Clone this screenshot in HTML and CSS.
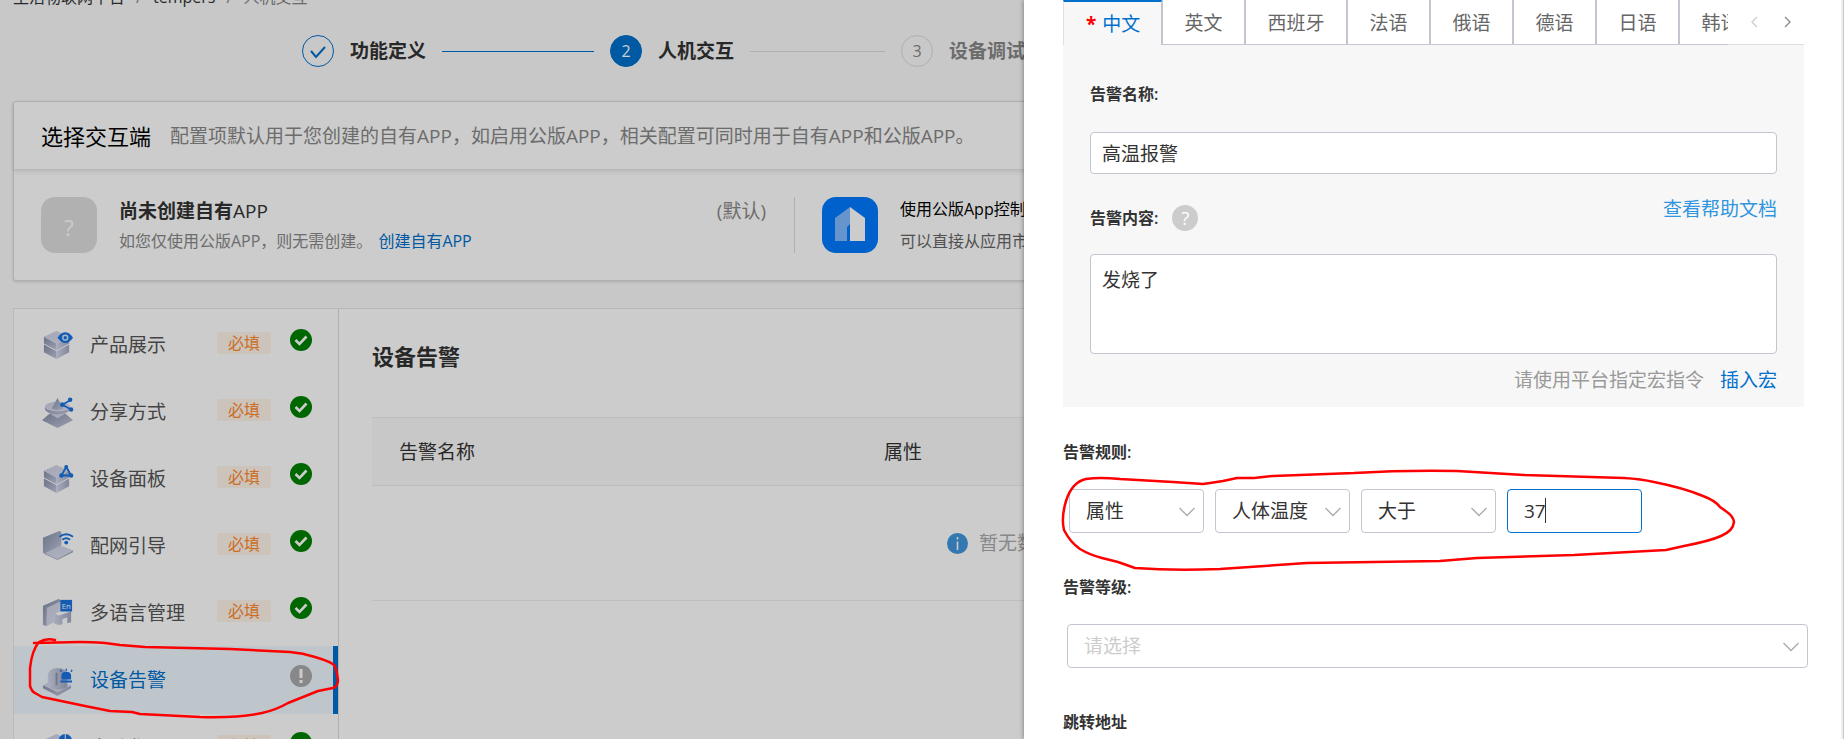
FILE: index.html
```html
<!DOCTYPE html>
<html lang="zh-CN">
<head>
  <meta charset="UTF-8">
  <title>人机交互 - 设备告警</title>
  <meta name="viewport" content="width=device-width, initial-scale=1.0">
  <link rel="stylesheet" href="styles.css">
</head>
<body>
  <!-- shared icon shapes -->
  <svg class="defs" width="0" height="0" aria-hidden="true">
    <defs>
      <linearGradient id="gTop" x1="0" y1="0" x2="1" y2="1">
        <stop offset="0" stop-color="#cbcfe2"/><stop offset="1" stop-color="#dcdff0"/>
      </linearGradient>
      <linearGradient id="gLeft" x1="0" y1="0" x2="1" y2="1">
        <stop offset="0" stop-color="#8790aa"/><stop offset="1" stop-color="#c4c9df"/>
      </linearGradient>
      <linearGradient id="gRight" x1="0" y1="0" x2="1" y2="0">
        <stop offset="0" stop-color="#d3d8ec"/><stop offset="1" stop-color="#a2aac2"/>
      </linearGradient>
    </defs>
    <symbol id="box" viewBox="0 0 34 34">
      <path d="M3 17l13 7v8L3 25z" fill="url(#gLeft)"/>
      <path d="M29 17l-13 7v8l13-7z" fill="url(#gRight)"/>
      <path d="M3 9l13 7v7L3 16z" fill="url(#gLeft)"/>
      <path d="M29 9l-13 7v7l13-7z" fill="url(#gRight)"/>
      <path d="M16 3l13 6-13 7L3 9z" fill="url(#gTop)"/>
    </symbol>
    <symbol id="ok" viewBox="0 0 22 22">
      <circle cx="11" cy="11" r="11" fill="#008000"/>
      <path d="M5.500 11l4 4 7-7.500" fill="none" stroke="#fff" stroke-width="2.600"/>
    </symbol>
    <symbol id="arrow" viewBox="0 0 16 10">
      <path d="M.5 1L8 8.500 15.500 1" fill="none" stroke="#aaa" stroke-width="1.300"/>
    </symbol>
  </svg>

  <div class="page">
    <nav class="breadcrumb">
      <a href="#">生活物联网平台</a><span>/</span><a href="#">tempers</a><span>/</span><em>人机交互</em>
    </nav>

    <ol class="steps">
      <li class="step">
        <span class="step-num done"><svg width="18" height="18" viewBox="0 0 18 18"><path d="M2 9l5 6 9-10" fill="none" stroke="#0070cc" stroke-width="2"/></svg></span>
        <b>功能定义</b>
      </li>
      <li class="step-line active"></li>
      <li class="step"><span class="step-num current">2</span><b>人机交互</b></li>
      <li class="step-line"></li>
      <li class="step wait"><span class="step-num">3</span><b>设备调试</b></li>
    </ol>

    <section class="card">
      <header class="card-head">
        <h2>选择交互端</h2>
        <p>配置项默认用于您创建的自有APP，如启用公版APP，相关配置可同时用于自有APP和公版APP。</p>
      </header>
      <div class="card-body">
        <div class="app own">
          <div class="app-icon">?</div>
          <div class="app-text">
            <h3>尚未创建自有<span>APP</span></h3>
            <p>如您仅使用公版APP，则无需创建。<a href="#">创建自有APP</a></p>
          </div>
          <span class="default">(默认)</span>
        </div>
        <div class="app public">
          <svg class="app-icon blue" viewBox="0 0 56 56">
            <path d="M28 10v17l-3 3v14H13V21z" fill="#80b9ff"/>
            <path d="M28 10l15 11v23H28z" fill="#fff"/>
          </svg>
          <div class="app-text">
            <h4>使用公版App控制设备</h4>
            <p>可以直接从应用市场下载</p>
          </div>
        </div>
      </div>
    </section>

    <section class="workspace">
      <ul class="menu">
        <li>
          <a href="#">
            <svg class="menu-icon" viewBox="0 0 34 34"><use href="#box"/><path d="M17 10q8-11 16 0-8 11-16 0z" fill="#1a73e0"/><circle cx="25" cy="10" r="2.500" fill="#1a73e0" stroke="#d5e4fa" stroke-width="1.500"/></svg>
            <span class="name">产品展示</span><span class="tag">必填</span>
            <svg class="state"><use href="#ok"/></svg>
          </a>
        </li>
        <li>
          <a href="#">
            <svg class="menu-icon" viewBox="0 0 34 34">
              <path d="M9 19h16l8 7-16 8L1 26z" fill="url(#gLeft)"/>
              <path d="M9 19h16l-8 5z" fill="url(#gTop)"/>
              <ellipse cx="17" cy="14" rx="13" ry="6" fill="url(#gLeft)"/>
              <ellipse cx="17" cy="12" rx="13" ry="5" fill="url(#gTop)"/>
              <path d="M17 3l6 11q-6 3-12 0z" fill="url(#gLeft)"/>
              <path d="M31 5l-9 5 9 5" fill="none" stroke="#1a73e0" stroke-width="1.800"/>
              <circle cx="30" cy="5" r="2.300" fill="#1a73e0"/><circle cx="22" cy="10" r="2.300" fill="#1a73e0"/><circle cx="31" cy="15" r="2.300" fill="#1a73e0"/>
            </svg>
            <span class="name">分享方式</span><span class="tag">必填</span>
            <svg class="state"><use href="#ok"/></svg>
          </a>
        </li>
        <li>
          <a href="#">
            <svg class="menu-icon" viewBox="0 0 34 34"><use href="#box"/><path d="M26 5l-5 9h10z" fill="none" stroke="#1a73e0" stroke-width="2"/><circle cx="26" cy="5" r="2" fill="#1a73e0"/><circle cx="21" cy="14" r="2.300" fill="#1a73e0"/><circle cx="31" cy="14" r="2.300" fill="#1a73e0"/></svg>
            <span class="name">设备面板</span><span class="tag">必填</span>
            <svg class="state"><use href="#ok"/></svg>
          </a>
        </li>
        <li>
          <a href="#">
            <svg class="menu-icon" viewBox="0 0 34 34">
              <path d="M2 9l17-7 2 1v14L4 26l-2-2z" fill="url(#gLeft)"/>
              <path d="M4 25l16-8 13 5-16 9z" fill="url(#gTop)"/>
              <path d="M4 25l13 6 16-9v2l-16 8-13-6z" fill="#a9b0c6"/>
              <path d="M19 8q7-5 14 0M22 11q4-3 8 0" fill="none" stroke="#1a73e0" stroke-width="2"/><circle cx="26" cy="14" r="2" fill="#1a73e0"/>
            </svg>
            <span class="name">配网引导</span><span class="tag">必填</span>
            <svg class="state"><use href="#ok"/></svg>
          </a>
        </li>
        <li>
          <a href="#">
            <svg class="menu-icon" viewBox="0 0 34 34">
              <path d="M2 10l16-7 4 2v7L6 19v12l-4-1z" fill="url(#gLeft)"/>
              <path d="M6 12l16-7v10l-9 4v8l-7 4z" fill="url(#gTop)"/>
              <path d="M13 17l5 3v10l-5-2zM18 20l13-4v11l-4 1v-6l-5 2v5l-4 1z" fill="url(#gRight)"/>
              <rect x="20" y="4" width="12" height="12" fill="#1a73e0"/>
              <text x="26" y="13" class="en">En</text>
            </svg>
            <span class="name">多语言管理</span><span class="tag">必填</span>
            <svg class="state"><use href="#ok"/></svg>
          </a>
        </li>
        <li class="selected">
          <a href="#">
            <svg class="menu-icon" viewBox="0 0 34 34">
              <path d="M2 22l15 6 14-6v3l-14 8-15-8z" fill="url(#gLeft)"/>
              <path d="M2 22l13-6 16 6-14 7z" fill="url(#gTop)"/>
              <path d="M7 24V13q0-9 10-9t10 9v11q-10 5-20 0z" fill="url(#gRight)"/>
              <path d="M16 9v13" stroke="#8e97b0" stroke-width="2"/>
              <path d="M20 17h12v2H20zM21 16v-4q0-4 5-4t5 4v4z" fill="#1a73e0"/>
              <path d="M26 5v2M20 6l1 2M32 6l-1 2" stroke="#1a73e0" stroke-width="1.500"/>
            </svg>
            <span class="name">设备告警</span>
            <svg class="state" viewBox="0 0 22 22"><circle cx="11" cy="11" r="11" fill="#aaa"/><path d="M11 4v9M11 15v3" stroke="#fff" stroke-width="3"/></svg>
          </a>
        </li>
        <li>
          <a href="#">
            <svg class="menu-icon" viewBox="0 0 34 34"><use href="#box"/><circle cx="25" cy="10" r="7" fill="#1a73e0"/><path d="M25 3v7l5 4" fill="none" stroke="#fff"/></svg>
            <span class="name">自动化</span><span class="tag">必填</span>
            <svg class="state"><use href="#ok"/></svg>
          </a>
        </li>
      </ul>

      <div class="content">
        <h2>设备告警</h2>
        <table>
          <thead>
            <tr><th class="col-name">告警名称</th><th>属性</th></tr>
          </thead>
          <tbody>
            <tr>
              <td colspan="2">
                <div class="empty">
                  <svg width="21" height="21" viewBox="0 0 21 21"><circle cx="10.500" cy="10.500" r="10.500" fill="#4096dc"/><path d="M10.500 4v2.500M10.500 8.500V17" stroke="#fff" stroke-width="1.600"/></svg>
                  暂无数据
                </div>
              </td>
            </tr>
          </tbody>
        </table>
      </div>
    </section>
  </div>

  <div class="mask"></div>

  <svg class="mark mark-menu" width="360" height="739" viewBox="0 0 360 739" aria-hidden="true">
    <path d="M55 640Q46 638 39 642 32 650 30 668V686Q32 692 35 693L42 697 85 706 110 711 132 712 140 714 200 717Q240 718 262 713 276 710 288 703L318 691 333 688Q338 686 338 680 337 672 335 666 332 662 315 657 303 653 290 652L230 649 145 647 120 645 105 643Q90 642 80 642L34 643"/>
  </svg>

  <aside class="drawer">
    <div class="tabs">
      <div class="tab-list" role="tablist">
        <button class="tab on" role="tab"><i>*</i>中文</button>
        <button class="tab" role="tab">英文</button>
        <button class="tab" role="tab">西班牙</button>
        <button class="tab" role="tab">法语</button>
        <button class="tab" role="tab">俄语</button>
        <button class="tab" role="tab">德语</button>
        <button class="tab" role="tab">日语</button>
        <button class="tab" role="tab">韩语</button>
      </div>
      <div class="tab-nav">
        <button aria-label="上一页" disabled><svg width="7" height="12" viewBox="0 0 7 12"><path d="M6 1L1 6l5 5" fill="none" stroke="#ccc" stroke-width="1.300"/></svg></button>
        <button aria-label="下一页"><svg width="7" height="12" viewBox="0 0 7 12"><path d="M1 1l5 5-5 5" fill="none" stroke="#888" stroke-width="1.300"/></svg></button>
      </div>
    </div>

    <form>
      <div class="panel">
        <label for="alarmName">告警名称:</label>
        <input type="text" id="alarmName" class="text" value="高温报警">
        <div class="label-row">
          <label for="alarmText">告警内容:</label>
          <span class="help">?</span>
          <a href="#">查看帮助文档</a>
        </div>
        <textarea id="alarmText">发烧了</textarea>
        <p class="macro">请使用平台指定宏指令<a href="#">插入宏</a></p>
      </div>

      <label for="ruleType">告警规则:</label>
      <div class="rules">
        <div class="select">
          <select id="ruleType"><option>属性</option></select>
          <svg><use href="#arrow"/></svg>
        </div>
        <div class="select">
          <select aria-label="属性名称"><option>人体温度</option></select>
          <svg><use href="#arrow"/></svg>
        </div>
        <div class="select">
          <select aria-label="比较"><option>大于</option></select>
          <svg><use href="#arrow"/></svg>
        </div>
        <div class="value">
          <input type="text" aria-label="数值" value="37">
          <span class="caret"></span>
        </div>
      </div>

      <label for="level">告警等级:</label>
      <div class="select level">
        <select id="level"><option value="">请选择</option></select>
        <svg><use href="#arrow"/></svg>
      </div>

      <label for="jump">跳转地址</label>
      <input type="text" id="jump" class="text">
    </form>

    <svg class="mark" width="760" height="600" viewBox="0 0 760 600" aria-hidden="true">
      <path d="M179 484L149 482 96 479Q75 477 62 479 48 482 42 501 37 518 40 530 46 542 56 549 66 555 78 558L94 562 111 568Q150 571 196 569L283 563 416 561 453 558 550 555 642 550 660 546Q686 541 697 536 709 531 710 522 709 516 703 512L696 507Q692 501 679 496 660 488 630 482 617 479 600 478L500 475 433 471Q380 470 330 473L249 476 230 478 213 478 199 481 186 483 179 484"/>
    </svg>
  </aside>
</body>
</html>
```
FILE: styles.css
```css
* {
  box-sizing: border-box;
}

body {
  margin: 0;
  height: 100vh;
  overflow: hidden;
  position: relative;
  background: #fafafa;
  color: #333;
  font-family: "Open Sans", "Noto Sans CJK SC", sans-serif;
  font-size: 19px;
  line-height: 28px;
}

h2, h3, h4, p, ul, ol {
  margin: 0;
  padding: 0;
  list-style: none;
}

a {
  color: #0070cc;
  text-decoration: none;
}

button, input, select, textarea {
  font: inherit;
  color: inherit;
}

.defs {
  position: absolute;
}

.page {
  height: 100%;
  overflow: hidden;
  padding: 0 13px;
}

/* breadcrumb, scrolled half out of view */
.breadcrumb {
  display: flex;
  height: 28px;
  margin-top: -17px;
  font-size: 16px;
}

.breadcrumb a {
  color: #333;
}

.breadcrumb span {
  width: 28px;
  text-align: center;
  color: #888;
}

.breadcrumb em {
  font-style: normal;
  color: #888;
}

/* steps */
.steps {
  display: flex;
  align-items: center;
  margin: 24px 0 34px 289px;
}

.step {
  display: flex;
  flex: none;
  align-items: center;
  gap: 16px;
}

.step-num {
  display: flex;
  align-items: center;
  justify-content: center;
  width: 32px;
  height: 32px;
  border: 1px solid #ddd;
  border-radius: 50%;
  font-size: 16px;
}

.step-num.done {
  border-color: #0070cc;
}

.step-num.current {
  border-color: #0070cc;
  background: #0070cc;
  color: #fff;
}

.step.wait {
  color: #888;
}

.step-line {
  flex: none;
  width: 135px;
  height: 1px;
  margin: 0 16px;
  background: #ddd;
}

.step-line.active {
  width: 152px;
  background: #0070cc;
}

/* app card */
.card {
  border: 1px solid #ddd;
  border-radius: 3px;
  background: #fff;
  box-shadow: 0 1px 3px rgba(0, 0, 0, 0.15);
}

.card-head {
  display: flex;
  align-items: center;
  gap: 19px;
  height: 68px;
  padding: 0 27px;
  border-bottom: 1px solid #e6e6e6;
  box-shadow: 0 2px 4px rgba(0, 0, 0, 0.1);
}

.card-head h2 {
  color: #000;
  font-size: 22px;
  font-weight: 400;
}

.card-head p {
  color: #888;
}

.card-body {
  display: flex;
  padding: 27px;
}

.app {
  display: flex;
  align-items: flex-start;
  font-size: 16px;
}

.app.own {
  flex: 0 0 754px;
  border-right: 1px solid #ddd;
  padding-right: 28px;
}

.app.public {
  padding-left: 27px;
}

.app-icon {
  flex: none;
  width: 56px;
  height: 56px;
  margin-right: 22px;
  border-radius: 14px;
  background: #dedede;
  color: #fff;
  font-size: 22px;
  line-height: 60px;
  text-align: center;
}

.app-icon.blue {
  background: #007aff;
}

.app-text h3 {
  font-size: 19px;
}

.app-text h3 span {
  font-weight: 400;
}

.app-text p {
  margin-top: 4px;
  color: #888;
  line-height: 24px;
}

.app-text a {
  margin-left: 6px;
}

.app-text h4 {
  line-height: 24px;
  color: #000;
  font-weight: 400;
}

.app.public p {
  margin-top: 8px;
  color: #666;
}

.default {
  margin-left: auto;
  color: #888;
  font-size: 19px;
}

/* menu and table */
.workspace {
  display: flex;
  height: 700px;
  margin-top: 27px;
  border: 1px solid #e6e6e6;
  background: #fff;
}

.menu {
  flex: none;
  width: 325px;
  padding-top: 2px;
  border-right: 1px solid #ddd;
}

.menu a {
  display: flex;
  align-items: center;
  height: 67px;
  padding: 0 26px 0 27px;
  color: #555;
}

.menu .selected a {
  height: 68px;
  padding-right: 21px;
  border-right: 5px solid #0070cc;
  background: #eef8ff;
  color: #0070cc;
}

.menu-icon {
  flex: none;
  width: 33px;
  height: 33px;
  margin-right: 16px;
}

.en {
  fill: #fff;
  font-size: 8px;
  text-anchor: middle;
}

.tag {
  width: 54px;
  height: 22px;
  margin: 0 0 4px auto;
  border-radius: 3px;
  background: #fff4ea;
  color: #ff8a30;
  font-size: 16px;
  line-height: 22px;
  text-align: center;
}

.state {
  width: 22px;
  height: 22px;
  margin: 0 0 9px 19px;
}

.selected .state {
  margin-left: auto;
}

.content {
  flex: 1;
  padding: 33px 33px 0;
}

.content h2 {
  font-size: 22px;
}

.content table {
  width: 100%;
  margin-top: 47px;
  border-collapse: collapse;
  table-layout: fixed;
}

.content th {
  height: 68px;
  padding: 0 27px;
  border-top: 1px solid #eee;
  background: #fafafa;
  font-weight: 400;
  text-align: left;
}

.content .col-name {
  width: 485px;
}

.content td {
  height: 115px;
  padding: 0;
  border-top: 1px solid #eee;
  border-bottom: 1px solid #eee;
}

.empty {
  display: flex;
  align-items: center;
  gap: 11px;
  padding-left: 575px;
  color: #aaa;
}

.mask {
  position: absolute;
  inset: 0;
  background: rgba(0, 0, 0, 0.2);
}

/* hand drawn red marks */
.mark {
  position: absolute;
  top: 0;
  left: 0;
  fill: none;
  stroke: #f00;
  stroke-width: 2.5;
  stroke-linejoin: round;
  stroke-linecap: round;
  pointer-events: none;
}

/* drawer */
.drawer {
  position: absolute;
  top: 0;
  right: 0;
  bottom: 0;
  width: 820px;
  max-width: 100%;
  overflow: hidden;
  padding: 0 39px;
  border-right: 1px solid #c8c8c8;
  background: #fff;
  box-shadow: -1px 0 4px rgba(0, 0, 0, 0.3), inset -2px 0 0 #eee;
}

.tabs {
  display: flex;
  height: 45px;
  background: #fff;
}

.tab-list {
  display: flex;
  flex: 1;
  overflow: hidden;
}

.tab {
  flex: none;
  padding: 2px 22px 0 21px;
  border: 1px solid #c4c6cf;
  border-width: 0 1px 1px;
  background: #fff;
  color: #666;
}

.tab.on {
  padding: 0 21px 0 22px;
  border-top: 2px solid #0070cc;
  border-bottom: 0;
  border-left-color: #e0e0e0;
  background: #f7f7f7;
  color: #0070cc;
}

.tab i {
  margin-right: 6px;
  color: #f00;
  font-style: normal;
  font-weight: 700;
}

.tab-nav {
  display: flex;
  align-items: center;
  width: 76px;
  padding-left: 10px;
  border-bottom: 1px solid #dcdee3;
}

.tab-nav button {
  display: flex;
  justify-content: center;
  width: 33px;
  padding: 0;
  border: 0;
  background: none;
}

label {
  display: block;
  font-size: 16px;
  font-weight: 600;
}

.panel {
  margin-bottom: 31px;
  padding: 35px 27px 13px;
  background: #f7f7f7;
}

.text {
  display: block;
  width: 100%;
  height: 42px;
  margin-top: 24px;
  padding: 0 11px;
  border: 1px solid #c4c6cf;
  border-radius: 4px;
  background: #fff;
}

.label-row {
  display: flex;
  align-items: center;
  margin-top: 21px;
}

.help {
  width: 26px;
  height: 26px;
  margin-left: 14px;
  border-radius: 50%;
  background: #ccc;
  color: #fff;
  line-height: 26px;
  text-align: center;
}

.label-row a {
  margin: 0 0 18px auto;
  color: #2f95de;
}

textarea {
  display: block;
  width: 100%;
  height: 100px;
  margin-top: 13px;
  padding: 11px;
  border: 1px solid #c4c6cf;
  border-radius: 4px;
  background: #fff;
  resize: none;
}

.macro {
  margin-top: 12px;
  color: #999;
  text-align: right;
}

.macro a {
  margin-left: 16px;
}

.rules {
  display: flex;
  gap: 11px;
  margin: 23px 0 40px 6px;
}

.select, .value {
  position: relative;
  width: 135px;
}

.select select, .value input {
  display: block;
  width: 100%;
  height: 44px;
  padding: 0 16px;
  border: 1px solid #c4c6cf;
  border-radius: 4px;
  outline: 0;
  background: #fff;
  appearance: none;
}

.select svg {
  position: absolute;
  top: 18px;
  right: 9px;
  width: 16px;
  height: 10px;
  pointer-events: none;
}

.value input {
  border-color: #0070cc;
}

.caret {
  position: absolute;
  top: 9px;
  left: 38px;
  width: 1px;
  height: 25px;
  background: #333;
}

.select.level {
  width: auto;
  margin: 23px -4px 40px 4px;
}

.level select {
  color: #ccc;
}
```
